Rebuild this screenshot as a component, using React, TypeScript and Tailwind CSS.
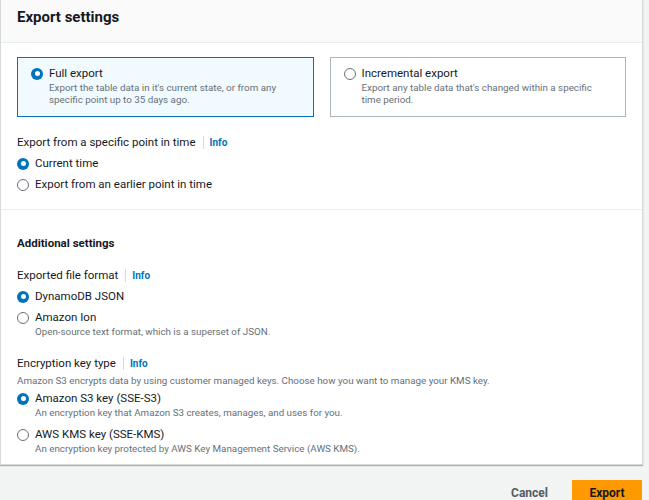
import React from "react";

function Radio({ checked }: { checked: boolean }) {
  return checked ? (
    <span className="flex h-[12px] w-[12px] shrink-0 items-center justify-center rounded-full bg-[#0073bb]">
      <span className="h-[5px] w-[5px] rounded-full bg-white" />
    </span>
  ) : (
    <span className="h-[12px] w-[12px] shrink-0 rounded-full border border-[#687078] bg-white" />
  );
}

function Tile({
  checked,
  label,
  desc,
}: {
  checked: boolean;
  label: string;
  desc: string;
}) {
  return (
    <div
      className={
        checked
          ? "flex-1 border border-[#0073bb] bg-[#f1faff] pl-[13px] pr-3 pt-[7px] pb-[10px]"
          : "flex-1 border border-[#aab7b8] bg-white pl-[13px] pr-3 pt-[7px] pb-[10px]"
      }
    >
      <div className="flex h-[17px] items-center gap-[6px]">
        <Radio checked={checked} />
        <span className="text-[11.5px] text-[#16191f]">{label}</span>
      </div>
      <p className="pl-[18px] text-[9.8px] leading-[12px] text-[#687078]">{desc}</p>
    </div>
  );
}

function Option({
  checked,
  label,
  desc,
}: {
  checked: boolean;
  label: string;
  desc?: string;
}) {
  return (
    <div>
      <div className="flex h-[21px] items-center gap-[6px]">
        <Radio checked={checked} />
        <span className="text-[11.5px] text-[#16191f]">{label}</span>
      </div>
      {desc && (
        <p className="-mt-[3px] pl-[18px] text-[9.8px] leading-[14px] text-[#687078]">{desc}</p>
      )}
    </div>
  );
}

function FieldLabel({ text }: { text: string }) {
  return (
    <div className="flex h-[21px] items-center">
      <span className="text-[11.5px] text-[#16191f]">{text}</span>
      <span className="ml-[7px] mr-[6px] h-[13px] w-px bg-[#d5dbdb]" />
      <span className="text-[10px] font-bold text-[#0073bb]">Info</span>
    </div>
  );
}

export default function App() {
  return (
    <div
      className="h-[500px] w-[649px] overflow-hidden bg-[#f2f3f3]"
      style={{ fontFamily: "Roboto, 'Liberation Sans', sans-serif" }}
    >
      <div className="w-[643px] border-x border-b border-[#d5dbdb] bg-white shadow-[0_1px_1px_0_rgba(0,28,36,0.3)]">
        <div className="border-b border-[#eaeded] bg-[#fafafa] px-4 pt-[6px] pb-[14px]">
          <h2 className="text-[15px] font-bold leading-[22px] text-[#16191f]">Export settings</h2>
        </div>

        <div className="px-4 pt-[14px] pb-[14px]">
          <div className="flex gap-4">
            <Tile
              checked
              label="Full export"
              desc="Export the table data in it's current state, or from any specific point up to 35 days ago."
            />
            <Tile
              checked={false}
              label="Incremental export"
              desc="Export any table data that's changed within a specific time period."
            />
          </div>

          <div className="mt-[15px]">
            <FieldLabel text="Export from a specific point in time" />
            <Option checked label="Current time" />
            <Option checked={false} label="Export from an earlier point in time" />
          </div>
        </div>

        <div className="border-t border-[#eaeded] px-4 pt-[23px] pb-[8px]">
          <h3 className="text-[11.5px] font-bold leading-[20px] text-[#16191f]">Additional settings</h3>

          <div className="mt-[12px]">
            <FieldLabel text="Exported file format" />
            <Option checked label="DynamoDB JSON" />
            <Option
              checked={false}
              label="Amazon Ion"
              desc="Open-source text format, which is a superset of JSON."
            />
          </div>

          <div className="mt-[14px]">
            <FieldLabel text="Encryption key type" />
            <p className="text-[9.8px] leading-[14px] text-[#687078]">
              Amazon S3 encrypts data by using customer managed keys. Choose how you want to manage your KMS key.
            </p>
            <Option
              checked
              label="Amazon S3 key (SSE-S3)"
              desc="An encryption key that Amazon S3 creates, manages, and uses for you."
            />
            <div className="mt-[4px]">
              <Option
                checked={false}
                label="AWS KMS key (SSE-KMS)"
                desc="An encryption key protected by AWS Key Management Service (AWS KMS)."
              />
            </div>
          </div>
        </div>
      </div>

      <div className="mt-[15px] flex w-[642px] items-center justify-end gap-[24px]">
        <button className="text-[12px] font-bold text-[#545b64]">Cancel</button>
        <button className="h-[26px] w-[70px] bg-[#ff9900] text-[12px] font-bold text-[#16191f]">Export</button>
      </div>
    </div>
  );
}
